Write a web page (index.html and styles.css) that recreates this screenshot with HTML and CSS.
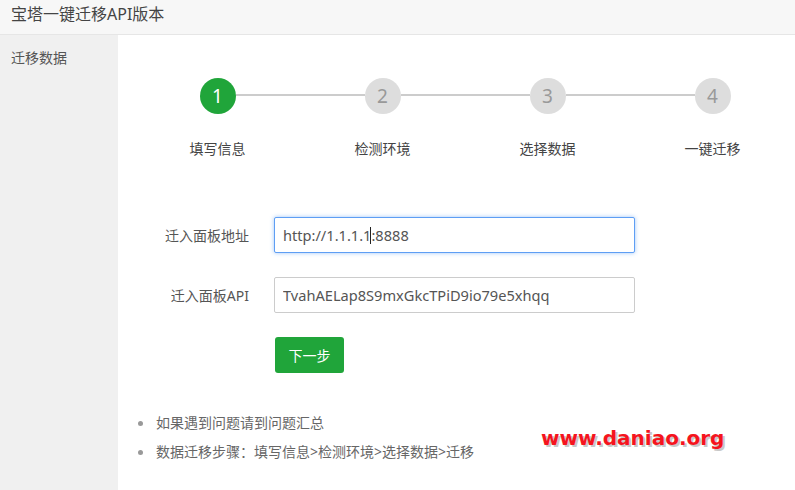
FILE: index.html
```html
<!DOCTYPE html>
<html lang="zh-CN">
<head>
<meta charset="utf-8">
<title>宝塔一键迁移API版本</title>
<link rel="stylesheet" href="styles.css">
</head>
<body>
<div class="page">
  <header class="header">宝塔一键迁移API版本</header>
  <div class="layout">
    <aside class="sidebar">
      <div class="side-item">迁移数据</div>
    </aside>
    <main class="main">
      <div class="steps">
        <div class="step done">
          <div class="circle">1</div>
          <div class="step-label">填写信息</div>
        </div>
        <div class="step">
          <div class="circle">2</div>
          <div class="step-label">检测环境</div>
        </div>
        <div class="step">
          <div class="circle">3</div>
          <div class="step-label">选择数据</div>
        </div>
        <div class="step last">
          <div class="circle">4</div>
          <div class="step-label">一键迁移</div>
        </div>
      </div>

      <form class="form">
        <div class="row">
          <label class="label">迁入面板地址</label>
          <div class="field">
            <input class="input focused" type="text" value="http://1.1.1.1:8888">
            <span class="caret"></span>
          </div>
        </div>
        <div class="row">
          <label class="label">迁入面板API</label>
          <div class="field">
            <input class="input" type="text" value="TvahAELap8S9mxGkcTPiD9io79e5xhqq">
          </div>
        </div>
        <div class="row">
          <span class="label"></span>
          <button class="btn" type="button">下一步</button>
        </div>
      </form>

      <ul class="tips">
        <li>如果遇到问题请到问题汇总</li>
        <li>数据迁移步骤：填写信息&gt;检测环境&gt;选择数据&gt;迁移</li>
      </ul>
    </main>
  </div>
  <div class="watermark">www.daniao.org</div>
</div>
</body>
</html>
```

FILE: styles.css
```css
html, body {
  margin: 0;
  padding: 0;
}
body {
  font-family: "Noto Sans", "Noto Sans CJK SC", sans-serif;
  color: #333;
  background: #fff;
}
.page {
  position: relative;
  width: 795px;
  height: 490px;
  overflow: hidden;
}
.header {
  height: 35px;
  box-sizing: border-box;
  background: #f7f7f7;
  border-bottom: 1px solid #e6e6e6;
  padding: 2px 0 0 11px;
  font-size: 16px;
  line-height: 24px;
  color: #444;
}
.layout {
  display: flex;
  height: 455px;
}
.sidebar {
  width: 119px;
  background: #f0f0f0;
  padding: 13px 11px 0;
  box-sizing: border-box;
}
.side-item {
  font-size: 14px;
  line-height: 20px;
  color: #555;
}
.main {
  flex: 1;
  background: #fff;
}
.steps {
  display: grid;
  grid-template-columns: repeat(4, 165px);
  margin: 43px 0 0 17px;
}
.step {
  position: relative;
  display: flex;
  flex-direction: column;
  align-items: center;
}
.step::after {
  content: "";
  position: absolute;
  left: calc(50% + 18px);
  width: 129px;
  top: 16px;
  height: 2px;
  background: #ccc;
}
.step.last::after {
  display: none;
}
.circle {
  width: 36px;
  height: 36px;
  border-radius: 50%;
  background: #ddd;
  color: #999;
  font-size: 19px;
  line-height: 36px;
  text-align: center;
  font-family: "Noto Sans", sans-serif;
}
.step.done .circle {
  background: #20a53a;
  color: #fff;
}
.step-label {
  margin-top: 25px;
  font-size: 14px;
  line-height: 20px;
  color: #444;
}
.form {
  margin-top: 58px;
  display: flex;
  flex-direction: column;
  gap: 24px;
}
.row {
  display: flex;
  align-items: center;
  gap: 24px;
  height: 36px;
}
.label {
  width: 131px;
  text-align: right;
  font-size: 14px;
  color: #555;
}
.field {
  position: relative;
  margin-left: 1px;
}
.input {
  display: block;
  width: 361px;
  height: 36px;
  box-sizing: border-box;
  border: 1px solid #ccc;
  border-radius: 2px;
  padding: 0 8px;
  font-family: "Noto Sans", "Noto Sans CJK SC", sans-serif;
  font-size: 14.6px;
  color: #555;
  outline: none;
  background: #fff;
}
.input.focused {
  border-color: #5e9ef4;
  box-shadow: 0 0 4px rgba(94, 158, 244, 0.6);
}
.caret {
  position: absolute;
  left: 96px;
  top: 10px;
  width: 1px;
  height: 17px;
  background: #222;
}
.btn {
  width: 69px;
  height: 36px;
  margin-left: 2px;
  border: none;
  border-radius: 3px;
  background: #20a53a;
  color: #fff;
  font-family: "Noto Sans CJK SC", sans-serif;
  font-size: 14px;
  padding: 0;
}
.tips {
  list-style: none;
  margin: 40px 0 0 20px;
  padding: 0;
}
.tips li {
  position: relative;
  padding-left: 18px;
  font-size: 14px;
  line-height: 20px;
  color: #666;
  margin-bottom: 9px;
}
.tips li::before {
  content: "";
  position: absolute;
  left: 0;
  top: 8px;
  width: 5px;
  height: 5px;
  border-radius: 50%;
  background: #999;
}
.watermark {
  position: absolute;
  left: 541px;
  top: 426px;
  font-family: "DejaVu Sans", sans-serif;
  font-weight: bold;
  font-size: 20px;
  line-height: 24px;
  color: #f5141e;
  text-shadow: 2px 2px 0 #c8c8c8;
}
```
